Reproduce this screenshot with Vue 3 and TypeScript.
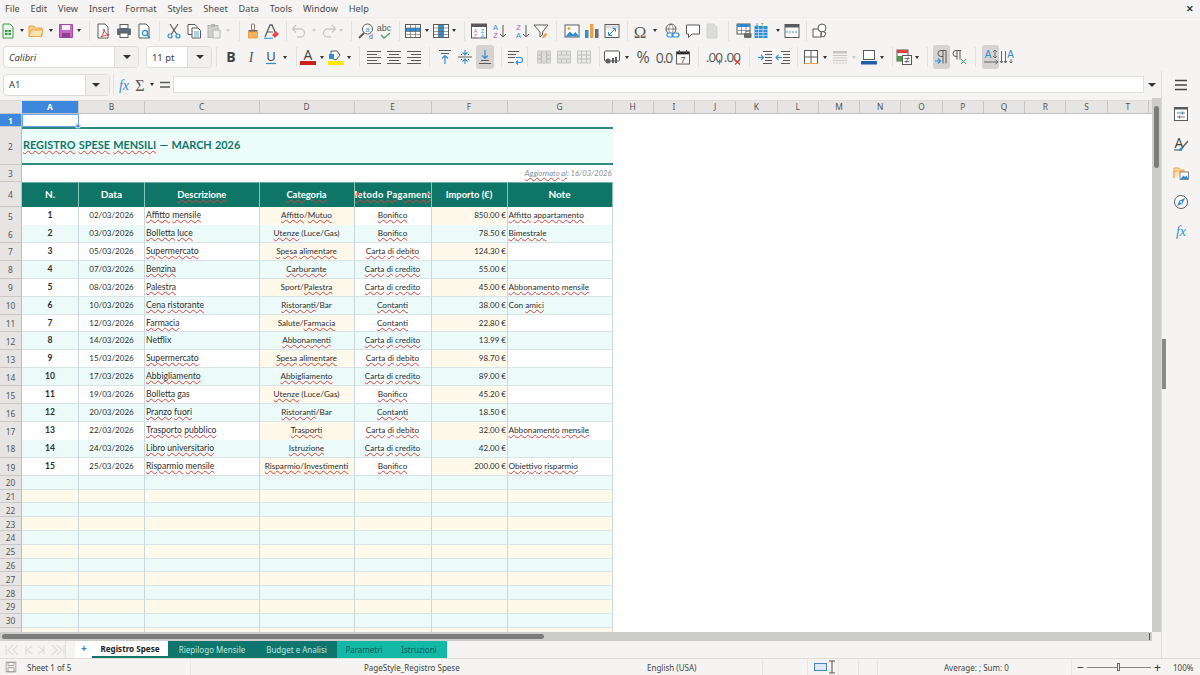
<script setup lang="ts">
type Slot = { k: string; c: number; on?: boolean; off?: boolean }

// icons are drawn on a 16x16 box
const gray = '#5a5a5a'
const blue = '#2f8fd6'
const orange = '#eda245'
const icons: Record<string, string> = {
  new: `<path d="M3 1h7l3 3v11H3z" fill="#eaf6ea" stroke="#3f9c4b"/><rect x="5" y="7" width="6" height="5" fill="#3f9c4b"/><path d="M5 9.5h6M8 7v5" stroke="#fff" stroke-width=".7"/>`,
  open: `<path d="M1 13.5V3h5l1.5 2H14v8.5z" fill="#fbd08a" stroke="${orange}"/><path d="M1 13.5 3 7h12l-2 6.5z" fill="#fde3b4" stroke="${orange}"/>`,
  save: `<path d="M1.5 1.5h13v13h-13z" fill="#c768c4" stroke="#a34aa3"/><rect x="4" y="2" width="8" height="5" fill="#fbeefb"/><rect x="4" y="10" width="8" height="4.5" fill="#8c3f8c"/>`,
  pdf: `<path d="M3 1h7l3 3v11H3z" fill="#fff" stroke="${gray}"/><path d="M6 14c2-2 3-5 3-8 0 3 2 5 5 6-3 0-6 1-8 2z" fill="none" stroke="#d8453e"/>`,
  print: `<rect x="4" y="1.5" width="8" height="4" fill="#fff" stroke="${gray}"/><rect x="1" y="5.5" width="14" height="6.5" rx="1" fill="#5d6b78"/><rect x="4" y="10" width="8" height="4.5" fill="#fff" stroke="${gray}"/>`,
  preview: `<path d="M3 1h7l3 3v11H3z" fill="#fff" stroke="${gray}"/><circle cx="9" cy="10" r="2.7" fill="#d8ecfa" stroke="${blue}" stroke-width="1.2"/><path d="m11 12 3 3" stroke="${blue}" stroke-width="1.4"/>`,
  cut: `<path d="M4 1l6.5 10M12 1 5.5 11" stroke="${gray}" stroke-width="1.2"/><circle cx="4" cy="13" r="2" fill="none" stroke="${blue}" stroke-width="1.2"/><circle cx="12" cy="13" r="2" fill="none" stroke="${blue}" stroke-width="1.2"/>`,
  copy: `<path d="M2 1.5h7l2 2v8H2z" fill="#fff" stroke="${gray}"/><path d="M6 5h6l2.5 2.5V15H6z" fill="#fff" stroke="${gray}"/><path d="M8 9h5M8 11h5M8 13h5" stroke="${blue}" stroke-width=".8"/>`,
  paste: `<rect x="2" y="2.5" width="10" height="12" fill="#cfcfcd" stroke="#b5b5b3"/><rect x="5" y="1" width="4" height="3" fill="#b5b5b3"/><path d="M7 7h7v8H7z" fill="#eee" stroke="#b5b5b3"/>`,
  brush: `<rect x="6.5" y="1" width="3" height="6" rx="1" fill="#fff" stroke="#8a6f4d"/><rect x="3.5" y="7" width="9" height="2" fill="#6e6e6e"/><path d="M3.5 9h9v6h-9z" fill="#f6b25e" stroke="${orange}"/>`,
  clear: `<path d="M2 14 7 2h2l4 9" fill="none" stroke="${gray}" stroke-width="1.3"/><path d="M4.5 9H10" stroke="${gray}"/><path d="m9 12 4-4 3 3-4 4z" fill="#e8474c"/><path d="M1 15.3h9" stroke="${blue}"/>`,
  undo: `<path d="M5 2 1.5 6 5 9.5M2 6h7.5a4 4 0 0 1 0 8H6" fill="none" stroke="#c9c9c7" stroke-width="1.3"/>`,
  redo: `<path d="M11 2l3.5 4L11 9.5M14 6H6.5a4 4 0 0 0 0 8H10" fill="none" stroke="#c9c9c7" stroke-width="1.3"/>`,
  find: `<circle cx="9.5" cy="6" r="5" fill="#fff" stroke="${gray}"/><path d="M6 10 1 15" stroke="${gray}" stroke-width="1.8"/><text x="9.5" y="8.5" font-size="7" text-anchor="middle" fill="${blue}" font-family="Liberation Sans">a</text><text x="13" y="15.5" font-size="7" text-anchor="middle" fill="${gray}" font-family="Liberation Sans">d</text>`,
  spell: `<text x="8" y="8" font-size="9" text-anchor="middle" fill="${gray}" font-family="Liberation Sans">abc</text><path d="m5 12 3 3 6-5" fill="none" stroke="#47a66a" stroke-width="1.3"/>`,
  rows: `<rect x=".5" y="1.5" width="15" height="13" fill="#fff" stroke="${gray}"/><rect x="1" y="5" width="14" height="3.5" fill="${blue}"/><path d="M1 5h14M1 8.5h14M1 11.5h14M5.5 2v12M10.5 2v12" stroke="${gray}" stroke-width=".6"/>`,
  cols: `<rect x=".5" y="1.5" width="15" height="13" fill="#fff" stroke="${gray}"/><rect x="5.5" y="2" width="5" height="12" fill="${blue}"/><path d="M1 5h14M1 8.5h14M1 11.5h14M5.5 2v12M10.5 2v12" stroke="${gray}" stroke-width=".6"/>`,
  sort: `<rect x=".5" y="1" width="15" height="14" fill="#fff" stroke="${gray}"/><rect x="1" y="1" width="14" height="3" fill="${gray}"/><text x="4.5" y="9.5" font-size="5.5" text-anchor="middle" fill="#b05fc2" font-family="Liberation Sans">A</text><text x="4.5" y="14.5" font-size="5.5" text-anchor="middle" fill="#b05fc2" font-family="Liberation Sans">Z</text><text x="11.5" y="9.5" font-size="5.5" text-anchor="middle" fill="${blue}" font-family="Liberation Sans">Z</text><text x="11.5" y="14.5" font-size="5.5" text-anchor="middle" fill="${blue}" font-family="Liberation Sans">A</text>`,
  asc: `<text x="4.5" y="7" font-size="7.5" text-anchor="middle" fill="${blue}" font-family="Liberation Sans">A</text><text x="4.5" y="15" font-size="7.5" text-anchor="middle" fill="#b05fc2" font-family="Liberation Sans">Z</text><path d="M12 2v12m-3-3 3 3 3-3" fill="none" stroke="${gray}"/>`,
  desc: `<text x="4.5" y="7" font-size="7.5" text-anchor="middle" fill="#b05fc2" font-family="Liberation Sans">Z</text><text x="4.5" y="15" font-size="7.5" text-anchor="middle" fill="${blue}" font-family="Liberation Sans">A</text><path d="M12 2v12m-3-3 3 3 3-3" fill="none" stroke="${gray}"/>`,
  filter: `<path d="M1 2h14L9.5 9v3L7 14V9z" fill="#fff" stroke="${gray}"/><path d="M9 15c2 0 5-1 5-5l-3 1z" fill="${orange}"/>`,
  image: `<rect x="1" y="2" width="14" height="12" fill="#fff" stroke="${gray}"/><circle cx="5" cy="5.5" r="1.5" fill="${orange}"/><path d="m1.5 13.5 4.5-5 3 3 2.5-2.5 3.5 4.5z" fill="${blue}"/>`,
  chart: `<rect x="1" y="7" width="3.5" height="8" fill="${blue}"/><rect x="6" y="1" width="3.5" height="14" fill="${orange}"/><rect x="11" y="6" width="3.5" height="9" fill="#6b6b6b"/>`,
  pivot: `<rect x="1" y="1.5" width="14" height="13" fill="#fff" stroke="${gray}"/><rect x="2" y="2.5" width="12" height="3" fill="#d8d8d6"/><path d="M5 12 11 6M8.5 5.5h3v3M4.5 9v3.5H8" fill="none" stroke="${blue}"/>`,
  omega: `<text x="8" y="14.5" font-size="17" text-anchor="middle" fill="${gray}" font-family="Liberation Serif">Ω</text>`,
  link: `<circle cx="7" cy="6" r="5" fill="#fff" stroke="${gray}"/><path d="M2 6h10M7 1c-3 3-3 7 0 10M7 1c3 3 3 7 0 10" fill="none" stroke="${gray}" stroke-width=".7"/><rect x="3" y="10" width="6" height="4" rx="2" fill="#fff" stroke="${blue}" stroke-width="1.2"/><rect x="8" y="10" width="7" height="4" rx="2" fill="none" stroke="${blue}" stroke-width="1.2"/>`,
  comment: `<path d="M1.5 2h13v9H7l-3.5 3.5V11h-2z" fill="#fff" stroke="${gray}"/>`,
  note: `<path d="M3 1h7l3 3v11H3z" fill="#dcdcda" stroke="#d2d2d0"/>`,
  ranges: `<rect x="1" y="1" width="13" height="10" fill="#fff" stroke="${gray}"/><rect x="1" y="1" width="13" height="3" fill="${blue}"/><path d="M5.5 1v10M10 1v10M1 7.5h13" stroke="${gray}" stroke-width=".6"/><rect x="8" y="10" width="7.5" height="5" rx="1" fill="#6b6b6b"/><rect x="10" y="8.5" width="3.5" height="2" fill="#fff" stroke="${gray}" stroke-width=".6"/>`,
  table: `<rect x="1.5" y="3" width="13" height="12" fill="${blue}"/><path d="M1.5 6.5h13M1.5 9.5h13M1.5 12.5h13M5.5 3v12M10 3v12" stroke="#cfe7f7" stroke-width=".7"/><text x="4" y="3.5" font-size="5" text-anchor="middle" fill="${blue}" font-family="Liberation Sans">A</text><text x="9" y="3.5" font-size="5" text-anchor="middle" fill="#43a047" font-family="Liberation Sans">Z</text>`,
  freeze: `<rect x="1" y="1.5" width="14" height="13" fill="#fff" stroke="${gray}"/><rect x="1" y="1.5" width="14" height="3" fill="${gray}"/><path d="M2 9h12" stroke="${blue}" stroke-dasharray="2 1"/>`,
  shapes: `<rect x="1" y="6" width="8" height="8" fill="#fff" stroke="${gray}"/><circle cx="10" cy="5" r="4" fill="#fff" stroke="${gray}"/><path d="m10 8 4 2-2 4-3-1z" fill="#fff" stroke="${gray}"/>`,
  bold: `<text x="8" y="13" font-size="14" font-weight="700" text-anchor="middle" fill="#444" font-family="Open Sans">B</text>`,
  italic: `<text x="8" y="13" font-size="14" font-style="italic" text-anchor="middle" fill="#555" font-family="Liberation Serif">I</text>`,
  under: `<text x="8" y="11.5" font-size="13" text-anchor="middle" fill="#444" font-family="Open Sans">U</text><path d="M3 14.5h10" stroke="${blue}" stroke-width="1.2"/>`,
  color: `<text x="8" y="11" font-size="14" text-anchor="middle" fill="#444" font-family="Open Sans">A</text><rect x="0" y="12" width="16" height="4" fill="#c9211e"/>`,
  bg: `<path d="M3 2h6l3 4-4 5-5-2z" fill="#fff" stroke="${gray}"/><rect x="1" y="5" width="5" height="5" fill="${blue}"/><rect x="0" y="12" width="16" height="4" fill="#ffe900"/>`,
  left: `<path d="M1 2.5h14M1 5.5h10M1 8.5h14M1 11.5h10M1 14.5h14" stroke="${gray}"/>`,
  center: `<path d="M1 2.5h14M3 5.5h10M1 8.5h14M3 11.5h10M1 14.5h14" stroke="${gray}"/>`,
  right: `<path d="M1 2.5h14M5 5.5h10M1 8.5h14M5 11.5h10M1 14.5h14" stroke="${gray}"/>`,
  top: `<path d="M2 1.5h12M4 4.5h8" stroke="${gray}"/><path d="M8 15V7M5 9.5l3-3 3 3" fill="none" stroke="${blue}" stroke-width="1.2"/>`,
  mid: `<path d="M1 8h14" stroke="${gray}"/><path d="M8 1v5M5.5 3.5 8 6l2.5-2.5M8 15v-5m-2.5 2.5L8 10l2.5 2.5" fill="none" stroke="${blue}" stroke-width="1.1"/><path d="M4 5.5h1M11 5.5h1M4 10.5h1M11 10.5h1" stroke="${gray}"/>`,
  bottom: `<path d="M2 14.5h12M4 11.5h8" stroke="${gray}"/><path d="M8 1v8M5 6.5l3 3 3-3" fill="none" stroke="${blue}" stroke-width="1.2"/>`,
  wrap: `<path d="M1 2.5h11M1 5.5h8M1 8.5h7M1 13.5h6" stroke="${gray}"/><path d="M9 8.5h4a1.5 1.5 0 0 1 0 5H9m2-2-2 2 2 2" fill="none" stroke="${blue}" stroke-width="1.1"/>`,
  merge: `<rect x="1.5" y="2" width="13" height="12" fill="#dcdcda" stroke="#c6c6c4"/><path d="M1.5 6h4M10.5 6h4M1.5 10h4M10.5 10h4M5.5 2v12M10.5 2v12" stroke="#b9b9b7"/>`,
  merge2: `<rect x="1.5" y="2" width="13" height="12" fill="#e2e2e0" stroke="#c6c6c4"/><path d="M1.5 6h13M1.5 10h13M5.5 2v4M10.5 2v4M5.5 10v4M10.5 10v4" stroke="#c0c0be"/>`,
  merge3: `<rect x="1.5" y="2" width="13" height="12" fill="#eaeae8" stroke="#c6c6c4"/><path d="M1.5 6h13M1.5 10h13M5.5 2v12M10.5 2v12" stroke="#c0c0be"/>`,
  currency: `<rect x=".5" y="2" width="15" height="10" rx="1" fill="#fff" stroke="${gray}"/><circle cx="4" cy="12" r="2.5" fill="#5d5d5d"/><rect x="8" y="9" width="2" height="5" fill="#5d5d5d"/><rect x="11" y="8" width="2" height="6" fill="#5d5d5d"/>`,
  percent: `<text x="8" y="14" font-size="16" text-anchor="middle" fill="#555" font-family="Open Sans">%</text>`,
  number: `<text x="8" y="14" font-size="14" text-anchor="middle" letter-spacing="-1" fill="#555" font-family="Open Sans">0.0</text>`,
  date: `<rect x="1.5" y="3" width="13" height="12" fill="#fff" stroke="${gray}"/><path d="M1.5 3h13v2h-13zM4.5 1v3M11.5 1v3" stroke="${gray}"/><text x="8" y="13.5" font-size="9" text-anchor="middle" fill="#444" font-family="Liberation Sans">7</text>`,
  adddec: `<text x="7" y="13" font-size="13.5" text-anchor="middle" letter-spacing="-.8" fill="#555" font-family="Open Sans">.00</text><path d="M12.5 10.5v5M10 13h5" stroke="${blue}" stroke-width="1.1"/>`,
  deldec: `<text x="7" y="13" font-size="13.5" text-anchor="middle" letter-spacing="-.8" fill="#555" font-family="Open Sans">.00</text><path d="m10 10.5 5 5m0-5-5 5" stroke="#d8453e" stroke-width="1.1"/>`,
  indent: `<path d="M6 2.5h9M8 5.5h7M8 8.5h7M8 11.5h7M6 14.5h9" stroke="${gray}"/><path d="M1 8.5h5M4 6l2.5 2.5L4 11" fill="none" stroke="${blue}" stroke-width="1.1"/>`,
  outdent: `<path d="M6 2.5h9M8 5.5h7M8 8.5h7M8 11.5h7M6 14.5h9" stroke="${gray}"/><path d="M1 8.5h6M3.5 6 1 8.5 3.5 11" fill="none" stroke="${blue}" stroke-width="1.1"/>`,
  borders: `<rect x="1.5" y="1.5" width="13" height="13" fill="#fff" stroke="${gray}"/><path d="M1.5 8h13M8 1.5v13" stroke="${gray}"/><path d="M1.5 14.5h13" stroke="${orange}"/>`,
  bstyle: `<path d="M1 2h14v2.5H1z" fill="#c6c6c4"/><path d="M1 6.5h14M1 9h14M1 11.5h14" stroke="#c6c6c4"/><path d="M1 14h14" stroke="#c6c6c4" stroke-dasharray="2 1"/>`,
  bcolor: `<rect x="2.5" y="1.5" width="11" height="9" fill="#fff" stroke="${gray}"/><rect x="0" y="12" width="16" height="3.5" rx=".5" fill="#1c5ea8"/>`,
  cond: `<rect x="1" y="1" width="11" height="11" fill="#fff" stroke="${gray}"/><rect x="1" y="1" width="11" height="3" fill="#d8453e"/><rect x="1" y="7" width="5" height="5" fill="#43a047"/><rect x="6.5" y="6.5" width="9" height="9" fill="#fff" stroke="${gray}"/><path d="M8.5 9.5h5M8.5 12.5h5M12.5 8 10 14" stroke="${gray}" stroke-width=".8"/>`,
  ltr: `<path d="M10 1.5v13M13 1.5v13M13 1.5H8a3 3 0 0 0 0 6h2" fill="none" stroke="${gray}"/><path d="M2 12h5M5 9.5 7.5 12 5 14.5" fill="none" stroke="${blue}" stroke-width="1.2"/>`,
  rtl: `<path d="M6 1.5v9M9 1.5v9M10 1.5H5a3 3 0 0 0 0 6h1" fill="none" stroke="${gray}"/><path d="m10 10 5 5m0-5-5 5" stroke="${blue}"/>`,
  htext: `<text x="5" y="8.5" font-size="10" text-anchor="middle" fill="${blue}" font-family="Liberation Sans">A</text><path d="M12 1v8M10 3l2-2 2 2M10 7l2 2 2-2" fill="none" stroke="${gray}" stroke-width=".8"/><path d="M1 13h14M12.5 11l2.5 2-2.5 2" fill="none" stroke="${gray}" stroke-width=".9"/>`,
  vtext: `<text x="11.5" y="8.5" font-size="10" text-anchor="middle" fill="${blue}" font-family="Liberation Sans">A</text><path d="M2.5 2v12M1 12l1.5 2L4 12M6.5 2v12M5 12l1.5 2L8 12M12 10v4M10.5 12.5 12 14l1.5-1.5" fill="none" stroke="${gray}" stroke-width=".9"/>`,
  burger: `<path d="M2 3.5h12M2 8h12M2 12.5h12" stroke="#444" stroke-width="1.5"/>`,
  props: `<rect x="1.5" y="1.5" width="13" height="13" fill="#fff" stroke="${gray}"/><rect x="1.5" y="1.5" width="13" height="2" fill="${gray}"/><path d="M4 7h8M4 11h8" stroke="${gray}" stroke-width=".8"/><path d="M9.5 5.5v3M6.5 9.5v3" stroke="${blue}" stroke-width="1.2"/>`,
  styles: `<text x="6" y="11.5" font-size="14" text-anchor="middle" fill="#444" font-family="Open Sans">A</text><path d="M1 14h8" stroke="#444"/><path d="m15 5-6 7" stroke="${gray}" stroke-width="1.2"/><path d="M7 12c2-1.5 3 0 2.5 1.5-1 1.5-3 1.5-3.5 1.5z" fill="${blue}"/>`,
  gallery: `<path d="M1 13V3h5l1.5 2H11v2" fill="#fde3b4" stroke="${orange}"/><path d="M1 13V6h10" fill="#fde3b4" stroke="${orange}"/><rect x="7" y="7" width="8.5" height="7.5" fill="#fff" stroke="${gray}" stroke-width=".7"/><path d="m7.5 14 3-3.5 1.5 1.5 1.5-1.5 2 3.5z" fill="${blue}"/>`,
  compass: `<circle cx="8" cy="8" r="6.5" fill="#fff" stroke="${gray}"/><path d="M12 4 9.5 9.5 4 12l2.5-5.5z" fill="${blue}"/><circle cx="8" cy="8" r="1" fill="#fff"/>`,
  fx: `<text x="8" y="13" font-size="14" font-style="italic" text-anchor="middle" fill="${blue}" font-family="Liberation Serif">fx</text>`,
  sum: `<text x="8" y="14" font-size="16" text-anchor="middle" fill="${gray}" font-family="Liberation Serif">Σ</text>`,
  eq: `<path d="M3 5.5h10M3 10h10" stroke="${gray}" stroke-width="1.6"/>`,
  saved: `<rect x="1.5" y="1.5" width="13" height="13" fill="#f5f4f2" stroke="#8e8e8e"/><rect x="4" y="2" width="8" height="4" fill="none" stroke="#8e8e8e"/><rect x="4" y="9" width="8" height="5.5" fill="none" stroke="#8e8e8e"/>`
}

function slots(items: Slot[]) {
  // the width of a slot runs halfway to each neighbour so the centres land in place
  return items.map((it, n) => {
    const prev = n ? items[n - 1].c : it.c - 11
    const next = n < items.length - 1 ? items[n + 1].c : it.c + 11
    return { ...it, w: (next - prev) / 2 }
  })
}

const i = (k: string, c: number, extra: Partial<Slot> = {}): Slot => ({ k, c, ...extra })
const a = (c: number, off = false): Slot => ({ k: 'arrow', c, off })
const s = (c: number): Slot => ({ k: 'sep', c })

const row1 = slots([
  i('new', 13), a(27), i('open', 41), a(57), i('save', 71), a(86), s(93), i('pdf', 106), i('print', 129),
  i('preview', 153), s(164), i('cut', 178), i('copy', 199), i('paste', 221), a(235, true), s(244),
  i('brush', 256), i('clear', 278), s(292), i('undo', 304), a(319, true), i('redo', 334), a(349, true),
  s(355), i('find', 370), i('spell', 391), s(405), i('rows', 418), a(432), i('cols', 447), a(461), s(469),
  i('sort', 482), i('asc', 505), i('desc', 527), i('filter', 549), s(562), i('image', 576), i('chart', 597),
  i('pivot', 620), s(633), i('omega', 645), a(660), i('link', 676), i('comment', 698), i('note', 720),
  s(733), i('ranges', 748), i('table', 768), a(783), i('freeze', 798), s(812), i('shapes', 826)
])

const row2 = slots([
  s(216), i('bold', 228), i('italic', 251), i('under', 272), a(286), s(295), i('color', 306), a(321),
  i('bg', 336), a(350), s(358), i('left', 371), i('center', 393), i('right', 415), s(430), i('top', 442),
  i('mid', 464), i('bottom', 486, { on: true }), s(501), i('wrap', 514), s(527), i('merge', 541),
  i('merge2', 563), i('merge3', 585), s(599), i('currency', 611), a(626), i('percent', 641), i('number', 663),
  i('date', 685), s(698), i('adddec', 712), i('deldec', 735), s(749), i('indent', 762), i('outdent', 784),
  s(798), i('borders', 809), a(825), i('bstyle', 839), a(854, true), i('bcolor', 868), a(883), s(890),
  i('cond', 903), a(918), s(926), i('ltr', 938, { on: true }), i('rtl', 960), s(975),
  i('htext', 988, { on: true }), i('vtext', 1009)
])

const menus = ['File', 'Edit', 'View', 'Insert', 'Format', 'Styles', 'Sheet', 'Data', 'Tools', 'Window', 'Help']
const sideIcons = ['props', 'styles', 'gallery', 'compass', 'fx']
const columns = ['A', 'B', 'C', 'D', 'E', 'F', 'G', 'H', 'I', 'J', 'K', 'L', 'M', 'N', 'O', 'P', 'Q', 'R', 'S', 'T']
const headers = ['N.', 'Data', 'Descrizione', 'Categoria', 'Metodo Pagamento', 'Importo (€)', 'Note']

const spese = [
  ['1', '02/03/2026', 'Affitto mensile', 'Affitto/Mutuo', 'Bonifico', '850.00 €', 'Affitto appartamento'],
  ['2', '03/03/2026', 'Bolletta luce', 'Utenze (Luce/Gas)', 'Bonifico', '78.50 €', 'Bimestrale'],
  ['3', '05/03/2026', 'Supermercato', 'Spesa alimentare', 'Carta di debito', '124.30 €', ''],
  ['4', '07/03/2026', 'Benzina', 'Carburante', 'Carta di credito', '55.00 €', ''],
  ['5', '08/03/2026', 'Palestra', 'Sport/Palestra', 'Carta di credito', '45.00 €', 'Abbonamento mensile'],
  ['6', '10/03/2026', 'Cena ristorante', 'Ristoranti/Bar', 'Contanti', '38.00 €', 'Con amici'],
  ['7', '12/03/2026', 'Farmacia', 'Salute/Farmacia', 'Contanti', '22.80 €', ''],
  ['8', '14/03/2026', 'Netflix', 'Abbonamenti', 'Carta di credito', '13.99 €', ''],
  ['9', '15/03/2026', 'Supermercato', 'Spesa alimentare', 'Carta di debito', '98.70 €', ''],
  ['10', '17/03/2026', 'Abbigliamento', 'Abbigliamento', 'Carta di credito', '89.00 €', ''],
  ['11', '19/03/2026', 'Bolletta gas', 'Utenze (Luce/Gas)', 'Bonifico', '45.20 €', ''],
  ['12', '20/03/2026', 'Pranzo fuori', 'Ristoranti/Bar', 'Contanti', '18.50 €', ''],
  ['13', '22/03/2026', 'Trasporto pubblico', 'Trasporti', 'Carta di debito', '32.00 €', 'Abbonamento mensile'],
  ['14', '24/03/2026', 'Libro universitario', 'Istruzione', 'Carta di credito', '42.00 €', ''],
  ['15', '25/03/2026', 'Risparmio mensile', 'Risparmio/Investimenti', 'Bonifico', '200.00 €', 'Obiettivo risparmio']
]
const emptyRows = Array.from({ length: 12 }, (_, n) => n + 20)

// words the spell checker accepted in the reference
const known = new Set(['Netflix', 'gas', 'Con', 'Sport', 'Salute', 'Bar', '(Luce', 'Gas)', ' ', '/'])
const words = (text: string) => text.split(/([ /])/).map((w) => ({ w, bad: !known.has(w) }))

const tabs = [
  { name: 'Registro Spese', cls: 'active' },
  { name: 'Riepilogo Mensile', cls: 'dark' },
  { name: 'Budget e Analisi', cls: 'dark' },
  { name: 'Parametri', cls: 'light' },
  { name: 'Istruzioni', cls: 'light' }
]
</script>

<template>
  <div class="app">
    <div class="menubar">
      <span v-for="m in menus" :key="m">{{ m }}</span>
      <span class="close">✕</span>
    </div>

    <div class="toolbar first">
      <template v-for="(it, n) in row1" :key="n">
        <div class="slot" :style="{ width: it.w + 'px' }">
          <i v-if="it.k === 'sep'" class="sep"></i>
          <i v-else-if="it.k === 'arrow'" class="arrow" :class="{ off: it.off }"></i>
          <svg v-else class="ico" viewBox="0 0 16 16" v-html="icons[it.k]"></svg>
        </div>
      </template>
    </div>

    <div class="toolbar second">
      <div class="combo font"><span class="value italic">Calibri</span><b class="drop"><i class="arrow big"></i></b></div>
      <div class="combo size"><span class="value">11 pt</span><b class="drop"><i class="arrow big"></i></b></div>
      <template v-for="(it, n) in row2" :key="n">
        <div class="slot" :class="{ on: it.on }" :style="{ width: it.w + 'px' }">
          <i v-if="it.k === 'sep'" class="sep"></i>
          <i v-else-if="it.k === 'arrow'" class="arrow" :class="{ off: it.off }"></i>
          <svg v-else class="ico" viewBox="0 0 16 16" v-html="icons[it.k]"></svg>
        </div>
      </template>
    </div>

    <div class="body">
      <div class="main">
        <div class="formula">
          <div class="combo name"><span class="value">A1</span><b class="drop"><i class="arrow big"></i></b></div>
          <i class="sep"></i>
          <svg class="ico f" viewBox="0 0 16 16" v-html="icons.fx"></svg>
          <svg class="ico f" viewBox="0 0 16 16" v-html="icons.sum"></svg>
          <i class="arrow"></i>
          <svg class="ico f" viewBox="0 0 16 16" v-html="icons.eq"></svg>
          <div class="input"></div>
          <i class="arrow big"></i>
        </div>

        <div class="sheet-wrap">
          <div class="sheet">
            <div class="grid-row colheads">
              <div class="corner"></div>
              <div v-for="c in columns" :key="c" class="colhead" :class="{ sel: c === 'A' }">{{ c }}</div>
            </div>

            <div class="grid-row r1">
              <div class="rowhead sel">1</div>
              <div class="cursor"><i></i></div>
            </div>
            <div class="grid-row r2">
              <div class="rowhead">2</div>
              <div class="title"><span class="sp">REGISTRO</span> <span class="sp">SPESE</span> <span class="sp">MENSILI</span> — MARCH 2026</div>
            </div>
            <div class="grid-row r3">
              <div class="rowhead">3</div>
              <div class="updated"><span class="sp">Aggiornato</span> <span class="sp">al</span>: 16/03/2026</div>
            </div>
            <div class="grid-row r4">
              <div class="rowhead">4</div>
              <div v-for="h in headers" :key="h" class="th" :class="{ clip: h.startsWith('Metodo') }">
                <span :class="{ sp: h !== 'N.' && h !== 'Data' && h !== 'Note' && !h.startsWith('Importo') }">{{ h }}</span>
              </div>
            </div>

            <div v-for="(r, n) in spese" :key="r[0]" class="grid-row rd" :class="n % 2 ? 'mint' : 'plain'">
              <div class="rowhead">{{ n + 5 }}</div>
              <div class="td c num">{{ r[0] }}</div>
              <div class="td c dt">{{ r[1] }}</div>
              <div class="td"><span v-for="(p, x) in words(r[2])" :key="x" :class="{ sp: p.bad }">{{ p.w }}</span></div>
              <div class="td c tint small"><span v-for="(p, x) in words(r[3])" :key="x" :class="{ sp: p.bad }">{{ p.w }}</span></div>
              <div class="td c small"><span v-for="(p, x) in words(r[4])" :key="x" :class="{ sp: p.bad }">{{ p.w }}</span></div>
              <div class="td r tint dt">{{ r[5] }}</div>
              <div class="td note small"><span v-for="(p, x) in words(r[6])" :key="x" :class="{ sp: p.bad }">{{ p.w }}</span></div>
            </div>

            <div v-for="n in emptyRows" :key="n" class="grid-row re" :class="n % 2 ? 'cream' : 'mint'">
              <div class="rowhead">{{ n < 31 ? n : '' }}</div>
              <div v-for="c in 7" :key="c" class="td"></div>
            </div>
          </div>
          <div class="vscroll"><i></i></div>
        </div>

        <div class="hscroll"><i class="thumb"></i><i class="tick"></i></div>

        <div class="tabbar">
          <div class="nav">
            <svg width="60" height="14" viewBox="0 0 60 14">
              <path d="M1 2v10M8 2 3 7l5 5M13 2 8 7l5 5M21 3v8M27 3l-5 4 5 4M33 3l5 4-5 4M39 3v8M47 2l5 5-5 5M52 2l5 5-5 5M59 2v10" fill="none" stroke="#dfdedc" stroke-width="1.2" />
            </svg>
          </div>
          <div class="add">+</div>
          <div v-for="t in tabs" :key="t.name" class="tab" :class="t.cls">{{ t.name }}</div>
        </div>
      </div>

      <aside class="sidebar">
        <svg class="ico side" viewBox="0 0 16 16" v-html="icons.burger"></svg>
        <svg v-for="k in sideIcons" :key="k" class="ico side" viewBox="0 0 16 16" v-html="icons[k]"></svg>
        <i class="handle"></i>
      </aside>
    </div>

    <div class="status">
      <svg class="ico save" viewBox="0 0 16 16" v-html="icons.saved"></svg>
      <span class="st sheetno">Sheet 1 of 5</span>
      <span class="st words"></span>
      <span class="st style">PageStyle_Registro Spese</span>
      <span class="st lang">English (USA)</span>
      <span class="st blank"></span>
      <span class="st mode"><i class="modebox"></i><svg width="8" height="14" viewBox="0 0 8 14"><path d="M1 1h6M4 1v12M1 13h6" fill="none" stroke="#555" /></svg></span>
      <span class="st ins"></span>
      <span class="st rec"></span>
      <span class="st avg">Average: ; Sum: 0</span>
      <span class="st zoom">
        <b>−</b><i class="slider"><i></i></i><b>+</b>
      </span>
      <span class="st pct">100%</span>
    </div>
  </div>
</template>

<style scoped>
.app {
  width: 1200px;
  height: 675px;
  display: flex;
  flex-direction: column;
  overflow: hidden;
  background: #f5f4f2;
  font-family: "Noto Sans", "Open Sans", sans-serif;
  color: #3d3d3d;
}

.menubar {
  height: 17px;
  display: flex;
  align-items: center;
  gap: 10.9px;
  padding-left: 5px;
  font-size: 9.2px;
  color: #4a4a4a;
  border-bottom: 1px solid #eeedeb;
  flex: none;
}

.close {
  margin-left: auto;
  margin-right: 6px;
  font-size: 9px;
  color: #333;
  font-weight: 700;
}

.toolbar {
  display: flex;
  align-items: center;
  flex: none;
}

.first {
  height: 25px;
  padding-left: 2px;
}

.second {
  height: 28px;
  padding-left: 3px;
}

.slot {
  height: 24px;
  display: flex;
  align-items: center;
  justify-content: center;
  flex: none;
  border-radius: 3px;
}

.slot.on {
  background: #d6d4d0;
}

.ico {
  width: 16px;
  height: 16px;
  flex: none;
  overflow: visible;
}

.sep {
  width: 1px;
  height: 20px;
  background: #e2e0dd;
  flex: none;
}

.arrow {
  width: 0;
  height: 0;
  border-left: 2.5px solid transparent;
  border-right: 2.5px solid transparent;
  border-top: 3px solid #333;
  flex: none;
}

.arrow.off {
  border-top-color: #c8c8c6;
}

.arrow.big {
  border-left-width: 4px;
  border-right-width: 4px;
  border-top-width: 4px;
}

.combo {
  height: 22px;
  display: flex;
  align-items: stretch;
  background: #fff;
  border: 1px solid #dedcd8;
  border-radius: 4px;
  box-sizing: border-box;
  flex: none;
  overflow: hidden;
  font-size: 9.4px;
}

.combo .value {
  flex: 1;
  display: flex;
  align-items: center;
  padding-left: 5px;
}

.combo .italic {
  font-style: italic;
}

.drop {
  width: 23px;
  display: flex;
  align-items: center;
  justify-content: center;
  background: #f1f0ee;
  border-left: 1px solid #dedcd8;
}

.font {
  width: 136px;
  margin-right: 7px;
}

.size {
  width: 66px;
  margin-right: -1px;
}

.body {
  flex: 1;
  display: flex;
  min-height: 0;
}

.main {
  width: 1161px;
  display: flex;
  flex-direction: column;
  flex: none;
}

.formula {
  height: 27px;
  display: flex;
  align-items: center;
  padding-left: 3px;
  flex: none;
}

.name {
  width: 107px;
  margin-right: 3px;
}

.formula .sep {
  margin-right: 2px;
}

.formula .ico.f:nth-of-type(2) {
  margin-right: 2px;
}

.formula .ico.f:nth-of-type(3) {
  margin-left: 3px;
}

.input {
  flex: 1;
  height: 17px;
  margin-right: 2px;
  background: #fff;
  border: 1px solid #e2e0dd;
  box-sizing: border-box;
}

.formula .arrow.big {
  margin: 0 5px 0 2px;
}

.sheet-wrap {
  flex: 1;
  display: flex;
  min-height: 0;
}

.sheet {
  width: 1152px;
  background: #fff;
  overflow: hidden;
  font-family: Lato, "Noto Sans", sans-serif;
  margin-top: 2px;
}

.grid-row {
  display: grid;
  grid-template-columns: 22px 57px 66px 114.5px 95px 77px 76px 105px repeat(13, 41.27px);
  box-sizing: border-box;
}

.colheads {
  height: 14px;
  background: #e6e5e3;
  border-bottom: 1px solid #c4c3c1;
  border-top: 1px solid #dcdbd9;
}

.colhead {
  font-family: "Noto Sans", sans-serif;
  font-size: 8.4px;
  line-height: 12px;
  text-align: center;
  color: #555;
  border-right: 1px solid #c9c8c6;
}

.colhead.sel,
.rowhead.sel {
  background: #3d87dc;
  color: #fff;
  font-weight: 700;
}

.rowhead {
  font-family: "Noto Sans", sans-serif;
  font-size: 8.4px;
  color: #555;
  background: #e6e5e3;
  border-bottom: 1px solid #c9c8c6;
  border-right: 1px solid #bdbcba;
  display: flex;
  align-items: center;
  justify-content: center;
  box-sizing: border-box;
  padding-top: 1px;
}

.r1 {
  height: 13px;
}

.cursor {
  position: relative;
  border: 1px solid #6ba6e6;
  box-sizing: border-box;
  z-index: 1;
}

.cursor i {
  position: absolute;
  right: -3px;
  bottom: -3px;
  width: 4px;
  height: 4px;
  background: #3d87dc;
  border: 1px solid #fff;
  box-sizing: content-box;
  transform: scale(.75);
}

.r2 {
  height: 38px;
}

.title {
  grid-column: 2 / 9;
  background: #ecfdf9;
  border-top: 2px solid #2f8b80;
  border-bottom: 2px solid #2f8b80;
  color: #0f766e;
  font-size: 10.9px;
  font-weight: 700;
  line-height: 32px;
  padding-left: 1px;
  word-spacing: .6px;
  white-space: pre;
}

.r3 {
  height: 17px;
}

.updated {
  grid-column: 2 / 9;
  font-size: 7.6px;
  font-style: italic;
  color: #8a8f8e;
  text-align: right;
  line-height: 16px;
  padding-right: 1px;
}

.r4 {
  height: 25px;
}

.th {
  background: #0f7667;
  color: #fff;
  font-size: 9.4px;
  font-weight: 700;
  display: flex;
  align-items: center;
  justify-content: center;
  padding-bottom: 2px;
  border-right: 1px solid #8cc4bb;
  border-top: 1px solid #6fb3a8;
  overflow: hidden;
  white-space: nowrap;
  position: relative;
  box-sizing: border-box;
}

.th:nth-child(2),
.th:nth-child(3),
.th:last-child {
  font-size: 10px;
}

.th.clip span {
  flex: none;
  letter-spacing: .35px;
}

.th.clip::before,
.th.clip::after {
  content: "";
  position: absolute;
  top: 9px;
  border-top: 2.5px solid transparent;
  border-bottom: 2.5px solid transparent;
  z-index: 1;
}

.th.clip::before {
  left: 1px;
  border-right: 3px solid #ef5350;
}

.th.clip::after {
  right: 1px;
  border-left: 3px solid #ef5350;
}

.rd {
  height: 17.93px;
}

.re {
  height: 13.8px;
}

.td {
  font-size: 8.6px;
  color: #2e2e2e;
  line-height: 17.5px;
  padding: 0 1px;
  white-space: pre;
  overflow: hidden;
  border-right: 1px solid #c9d8dc;
  border-bottom: 1px solid #d8e4e6;
  box-sizing: border-box;
}

.td.c {
  text-align: center;
}

.td.r {
  text-align: right;
  padding-right: .5px;
}

.td.dt {
  font-size: 8px;
}

.td.small {
  font-size: 8.2px;
}

.td.num {
  font-weight: 700;
}

.td.note {
  overflow: visible;
}

.plain .td {
  background: #fff;
}

.plain .tint {
  background: #fff9ec;
}

.mint .td {
  background: #ecfbf9;
}

.cream .td {
  background: #fff9e9;
}

.sp {
  text-decoration: underline wavy #e0403a;
  text-decoration-thickness: .6px;
  text-underline-offset: .5px;
}

.vscroll {
  width: 9px;
  background: #cdcdcb;
  flex: none;
}

.vscroll i {
  display: block;
  width: 5px;
  height: 62px;
  margin: 8px auto 0;
  background: #7c7c7c;
  border-radius: 3px;
}

.hscroll {
  height: 9px;
  background: #cdcdcb;
  display: flex;
  align-items: center;
  flex: none;
  width: 1152px;
  padding-left: 2px;
  box-sizing: border-box;
}

.hscroll .thumb {
  width: 542px;
  height: 5px;
  background: #7c7c7c;
  border-radius: 3px;
}

.hscroll .tick {
  margin-left: auto;
  margin-right: 2px;
  width: 1px;
  height: 7px;
  background: #555;
}

.tabbar {
  height: 17px;
  display: flex;
  align-items: stretch;
  flex: none;
  font-size: 8px;
}

.nav {
  width: 66px;
  padding-left: 5px;
  box-sizing: border-box;
  display: flex;
  align-items: center;
  border-right: 1px solid #e2e0dd;
}

.add {
  width: 17px;
  margin-left: 9px;
  background: #fff;
  color: #3d7cc9;
  font-size: 10px;
  font-weight: 700;
  line-height: 15px;
  padding-left: 6px;
  box-sizing: border-box;
}

.tab {
  display: flex;
  align-items: center;
  justify-content: center;
  white-space: nowrap;
}

.tab.active {
  width: 76px;
  background: #fff;
  color: #222;
  font-size: 8.1px;
  font-weight: 700;
  border-bottom: 2px solid #0f766e;
  box-sizing: border-box;
}

.tab.dark {
  background: #0f766e;
  color: #bde6df;
}

.tab.dark:nth-of-type(4) {
  width: 88px;
}

.tab.dark:nth-of-type(5) {
  width: 81px;
}

.tab.light {
  background: #14b8a6;
  color: #0e5b54;
}

.tab.light:nth-of-type(6) {
  width: 54px;
}

.tab.light:nth-of-type(7) {
  width: 56px;
}

.sidebar {
  flex: 1;
  border-left: 1px solid #dcdad7;
  display: flex;
  flex-direction: column;
  align-items: center;
  gap: 13.3px;
  padding-top: 6px;
  position: relative;
}

.handle {
  position: absolute;
  left: 0;
  top: 268px;
  width: 4px;
  height: 50px;
  background: #8a8a88;
}

.status {
  height: 17px;
  flex: none;
  display: flex;
  align-items: center;
  font-size: 8px;
  color: #444;
  border-top: 1px solid #e0dedb;
  box-sizing: border-box;
}

.ico.save {
  width: 12px;
  height: 12px;
  margin-left: 5px;
}

.st {
  height: 16px;
  display: flex;
  align-items: center;
  box-sizing: border-box;
  border-left: 1px solid #e8e6e3;
  flex: none;
}

.sheetno {
  border-left: none;
  padding-left: 10px;
  width: 173px;
}

.words {
  width: 167px;
}

.style {
  width: 283px;
  padding-left: 7px;
  border-left: none;
}

.lang {
  width: 122px;
  padding-left: 7px;
  border-left: none;
}

.blank {
  width: 45px;
}

.mode {
  gap: 1px;
  width: 31px;
  padding-left: 6px;
}

.modebox {
  width: 11px;
  height: 6px;
  border: 1px solid #4d86bd;
  background: #dbe9f5;
}

.ins {
  width: 20px;
}

.rec {
  width: 19px;
}

.avg {
  width: 194px;
  padding-left: 66px;
}

.zoom {
  width: 100px;
  padding-left: 5px;
  gap: 3px;
}

.zoom b {
  font-weight: 400;
  font-size: 12px;
  color: #333;
}

.slider {
  width: 64px;
  height: 1px;
  background: #888;
  position: relative;
}

.slider i {
  position: absolute;
  left: 30px;
  top: -4px;
  width: 3px;
  height: 8px;
  border: 1px solid #666;
  background: #f5f4f2;
  box-sizing: border-box;
}

.pct {
  border-left: none;
  padding-left: 2px;
}
</style>
